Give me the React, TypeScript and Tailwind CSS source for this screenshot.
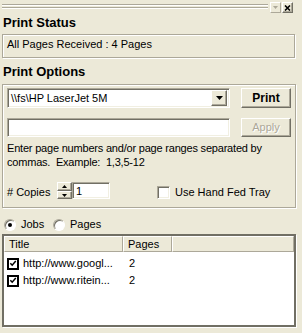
import React from "react";

const etched =
  "border border-[#aca899] shadow-[inset_1px_1px_0_#ffffff,1px_1px_0_#ffffff]";
const sunken =
  "border border-t-[#aca899] border-l-[#aca899] border-b-white border-r-white shadow-[inset_1px_1px_0_#716f64,inset_-1px_-1px_0_#f1efe2]";
const raised =
  "border border-t-white border-l-white border-b-[#716f64] border-r-[#716f64] shadow-[inset_-1px_-1px_0_#aca899]";

function Down({ color = "#000", w = 7, h = 4 }: { color?: string; w?: number; h?: number }) {
  return (
    <svg width={w} height={h} viewBox={`0 0 ${w} ${h}`}>
      <path d={`M0 0H${w}L${w / 2} ${h}Z`} fill={color} />
    </svg>
  );
}

function Check() {
  return (
    <svg width="9" height="9" viewBox="0 0 9 9">
      <path d="M1.5 4.2 L3.6 6.4 L7.6 1.8" stroke="#000" strokeWidth="1.7" fill="none" />
    </svg>
  );
}

function Row({ title }: { title: string }) {
  return (
    <div className="flex h-[17px] items-center">
      <div className="w-[119px] flex items-center pl-[3px]">
        <div className="w-[12px] h-[12px] border-2 border-black bg-white flex items-center justify-center">
          <Check />
        </div>
        <span className="ml-[4px] whitespace-nowrap">{title}</span>
      </div>
      <div className="pl-[6px]">2</div>
    </div>
  );
}

export default function App() {
  return (
    <div className="w-[302px] h-[333px] bg-[#ece9d8] overflow-hidden text-[11px] leading-[13px] text-black font-['Liberation_Sans',Arial,sans-serif] flex flex-col">
      {/* title bar */}
      <div className="h-[16px] flex items-start pl-[2px] shrink-0">
        <div className="w-[266px] mt-[4px] flex flex-col gap-[1px]">
          <div className="h-[2px] border-t border-t-[#aca899] border-b border-b-white" />
          <div className="h-[2px] border-t border-t-[#aca899] border-b border-b-white" />
        </div>
        <div className="ml-[2px] mt-[2px] w-[11px] h-[11px] border border-t-white border-l-white border-b-[#aca899] border-r-[#aca899] flex items-center justify-center">
          <Down color="#aca899" w={5} h={3} />
        </div>
        <div className={`ml-[1px] mt-[2px] w-[11px] h-[11px] ${raised} flex items-center justify-center`}>
          <svg width="7" height="6" viewBox="0 0 7 6">
            <path d="M1 0.5 L6 5.5 M6 0.5 L1 5.5" stroke="#000" strokeWidth="1.6" />
          </svg>
        </div>
      </div>

      {/* Print Status */}
      <div className="h-[18px] pl-[3px] font-bold text-[13px] leading-[14px] shrink-0">Print Status</div>
      <div className={`ml-[2px] w-[293px] h-[24px] pl-[4px] pt-[3px] shrink-0 ${etched}`}>
        All Pages Received : 4 Pages
      </div>

      {/* Print Options */}
      <div className="mt-[7px] h-[19px] pl-[3px] font-bold text-[13px] leading-[14px] shrink-0">Print Options</div>
      <div className={`ml-[2px] w-[294px] h-[124px] pt-[3px] pl-[4px] shrink-0 ${etched}`}>
        <div className="flex h-[20px]">
          <div className={`w-[223px] h-[20px] bg-white flex items-center pl-[3px] pr-[2px] ${sunken}`}>
            <span className="flex-1 whitespace-nowrap">\\fs\HP LaserJet 5M</span>
            <div className={`w-[16px] h-[16px] bg-[#ece9d8] flex items-center justify-center ${raised}`}>
              <Down />
            </div>
          </div>
          <button className={`ml-[11px] w-[50px] h-[20px] bg-[#ece9d8] font-bold text-[12px] leading-[14px] flex items-center justify-center ${raised}`}>
            Print
          </button>
        </div>
        <div className="flex h-[19px] mt-[10px]">
          <div className={`w-[223px] h-[19px] bg-white ${sunken}`} />
          <button className={`ml-[11px] w-[50px] h-[19px] bg-[#ece9d8] text-[#aca899] [text-shadow:1px_1px_0_#fff] flex items-center justify-center ${raised}`}>
            Apply
          </button>
        </div>
        <div className="mt-[4px] leading-[14px] whitespace-nowrap tracking-[-0.2px]">
          Enter page numbers and/or page ranges separated by
          <br />
          commas.&nbsp; Example:&nbsp; 1,3,5-12
        </div>
        <div className="mt-[13px] flex h-[18px]">
          <div className="w-[50px] pt-[4px]"># Copies</div>
          <div className="w-[15px] h-[17px] flex flex-col">
            <div className={`h-[9px] bg-[#ece9d8] flex items-center justify-center ${raised}`}>
              <svg width="5" height="3" viewBox="0 0 5 3"><path d="M0 3H5L2.5 0Z" fill="#000" /></svg>
            </div>
            <div className={`h-[8px] bg-[#ece9d8] flex items-center justify-center ${raised}`}>
              <Down w={5} h={3} />
            </div>
          </div>
          <div className={`w-[38px] h-[17px] bg-white pl-[3px] pt-[2px] ${sunken}`}>1</div>
          <div className={`ml-[47px] mt-[4px] w-[13px] h-[13px] bg-white ${sunken}`} />
          <div className="ml-[5px] pt-[4px] whitespace-nowrap">Use Hand Fed Tray</div>
        </div>
      </div>

      {/* radio row */}
      <div className="mt-[9px] h-[14px] leading-[14px] flex items-start pl-[4px] shrink-0">
        <div className="mt-[2px] w-[12px] h-[12px] rounded-full bg-white border border-t-[#aca899] border-l-[#aca899] border-b-white border-r-white shadow-[inset_1px_1px_0_#716f64] flex items-center justify-center">
          <div className="w-[4px] h-[4px] rounded-full bg-black" />
        </div>
        <div className="ml-[5px] w-[32px]">Jobs</div>
        <div className="mt-[2px] w-[12px] h-[12px] rounded-full bg-white border border-t-[#aca899] border-l-[#aca899] border-b-white border-r-white shadow-[inset_1px_1px_0_#716f64]" />
        <div className="ml-[5px]">Pages</div>
      </div>

      {/* list */}
      <div className="mt-[3px] ml-[2px] w-[294px] h-[93px] bg-white shrink-0 border-2 border-[#716f64] shadow-[1px_1px_0_#fff]">
        <div className="flex h-[16px] leading-[15px] bg-[#ece9d8]">
          <div className="w-[119px] pl-[4px] border border-t-white border-l-white border-b-[#aca899] border-r-[#aca899]">Title</div>
          <div className="w-[49px] pl-[4px] border border-t-white border-l-white border-b-[#aca899] border-r-[#aca899]">Pages</div>
          <div className="flex-1 border border-t-white border-l-white border-b-[#aca899] border-r-[#aca899]" />
        </div>
        <div className="pt-[3px]">
          <Row title="http://www.googl..." />
          <Row title="http://www.ritein..." />
        </div>
      </div>
    </div>
  );
}
